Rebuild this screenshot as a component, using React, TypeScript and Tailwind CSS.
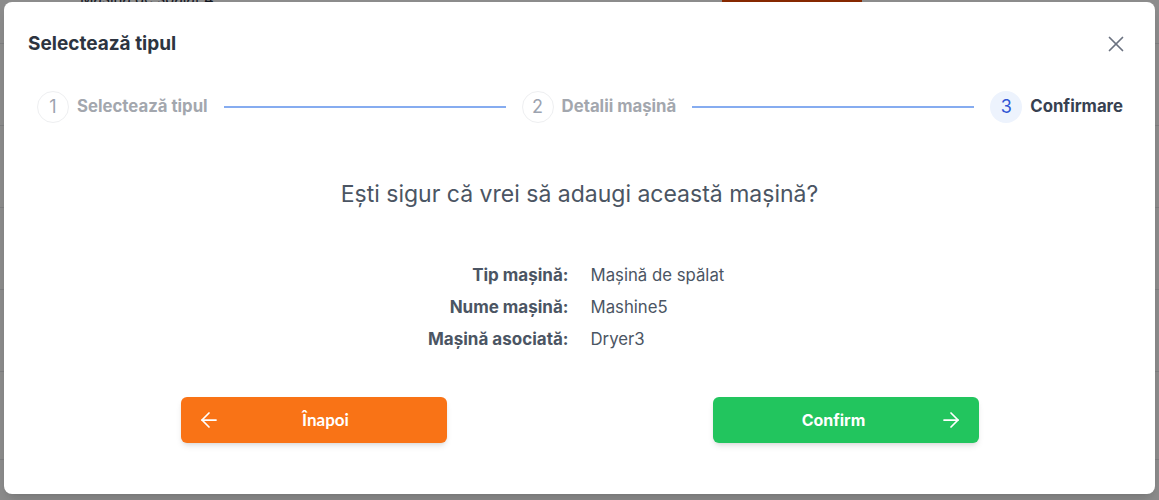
import { Fragment } from "react";
import { ArrowLeft, ArrowRight, X } from "lucide-react";

const steps = [
  { n: 1, label: "Selectează tipul" },
  { n: 2, label: "Detalii mașină" },
  { n: 3, label: "Confirmare" },
];

const details = [
  ["Tip mașină:", "Mașină de spălat"],
  ["Nume mașină:", "Mashine5"],
  ["Mașină asociată:", "Dryer3"],
];

function Background() {
  return (
    <div className="flex h-[500px] flex-col overflow-hidden bg-white font-['Inter',sans-serif]">
      <div className="-mt-[14px] flex h-[58px] items-start border-b border-gray-200">
        <span className="ml-[80px] w-[642px] pt-[2px] text-[15px] text-gray-800">Mașină de spălat 4</span>
        <span className="h-[16px] w-[140px] bg-orange-600" />
      </div>
      <div className="h-[82px] border-b border-gray-200" />
      <div className="h-[82px] border-b border-gray-200" />
      <div className="h-[82px] border-b border-gray-200" />
      <div className="h-[82px] border-b border-gray-200" />
      <div className="h-[88px] border-b border-gray-200" />
      <div className="flex items-start pt-[3px]">
        <span className="ml-[80px] w-[642px] text-[15px] text-gray-800">Dryer2</span>
        <span className="bg-green-600 px-2 text-[13px] font-bold text-white">Disponibila</span>
      </div>
    </div>
  );
}

function Stepper() {
  return (
    <div className="mt-[32px] flex items-center gap-4 pl-[9px] pr-[8px]">
      {steps.map((s, i) => {
        const active = s.n === 3;
        return (
          <Fragment key={s.n}>
            <div className="flex items-center gap-[8px]">
              <div
                className={
                  active
                    ? "flex h-[32px] w-[32px] items-center justify-center rounded-full bg-[#edf3fd] text-[18px] text-[#2f55d4]"
                    : "flex h-[32px] w-[32px] items-center justify-center rounded-full border border-[#eeeff1] text-[18px] text-[#9ca3af]"
                }
              >
                {s.n}
              </div>
              <span className={active ? "text-[16.75px] font-bold text-[#374151]" : "text-[16.75px] font-bold text-[#a3a7ae]"}>
                {s.label}
              </span>
            </div>
            {i < steps.length - 1 && <div className="h-[2px] flex-1 bg-[#86acf0]" />}
          </Fragment>
        );
      })}
    </div>
  );
}

export default function App() {
  return (
    <div className="relative h-[500px] w-full overflow-hidden">
      <Background />
      <div className="absolute inset-0 bg-black/[0.45]">
        <div className="mx-[4px] mt-[2px] h-[492px] rounded-lg bg-white px-6 pt-[28px] font-['Inter',sans-serif] shadow-lg">
          <div className="flex items-center justify-between">
            <h2 className="text-[19px] font-bold text-[#2d3440]">Selectează tipul</h2>
            <button className="mr-[2px] text-[#6b7280]">
              <X size={26} strokeWidth={1.6} />
            </button>
          </div>

          <Stepper />

          <p className="mt-[54px] text-center text-[23px] text-[#4b5563]">Ești sigur că vrei să adaugi această mașină?</p>

          <div className="mt-[53px] grid grid-cols-2 gap-x-[22px] gap-y-[10px] leading-[22px]">
            {details.map(([k, v]) => (
              <div key={k} className="contents">
                <span className="text-right text-[17px] font-bold text-[#4b5563]">{k}</span>
                <span className="text-[16.75px] text-[#4b5563]">{v}</span>
              </div>
            ))}
          </div>

          <div className="mt-[47px] flex justify-center gap-[266px]">
            <button className="flex h-[46px] w-[266px] items-center rounded-md bg-[#f97316] px-4 text-white shadow-md">
              <ArrowLeft size={24} strokeWidth={1.75} />
              <span className="flex-1 text-center font-['Lato',sans-serif] text-[17px] font-bold">Înapoi</span>
            </button>
            <button className="flex h-[46px] w-[266px] items-center rounded-md bg-[#22c55e] px-4 text-white shadow-md">
              <span className="flex-1 text-center text-[16px] font-bold">Confirm</span>
              <ArrowRight size={24} strokeWidth={1.75} />
            </button>
          </div>
        </div>
      </div>
    </div>
  );
}
